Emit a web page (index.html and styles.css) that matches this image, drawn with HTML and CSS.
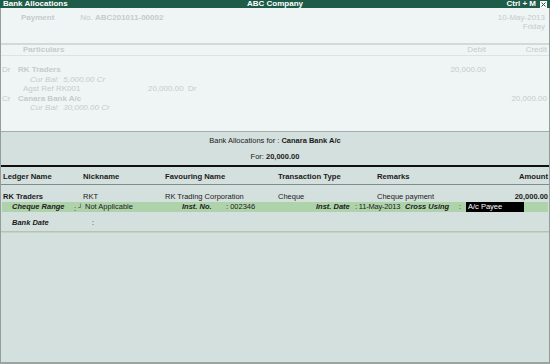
FILE: index.html
```html
<!DOCTYPE html>
<html lang="en">
<head>
    <meta charset="UTF-8">
    <title>Bank Allocations</title>
    <link rel="stylesheet" href="styles.css">
</head>
<body>
<div class="screen">
    <div class="titlebar">
        <span class="tb-left">Bank Allocations</span>
        <span class="tb-center">ABC Company</span>
        <span class="tb-right">Ctrl + M
            <svg class="close" width="7" height="7" viewBox="0 0 7 7">
                <rect x="0.5" y="0.5" width="6" height="6" fill="#ffffff" stroke="#ffffff"/>
                <path d="M1.5 1.5 L5.5 5.5 M5.5 1.5 L1.5 5.5" stroke="#1e5b48" stroke-width="1"/>
            </svg>
        </span>
    </div>

    <div class="frame">
        <!-- faded voucher behind the allocation screen -->
        <div class="voucher">
            <div class="vhead">
                <div class="vh-left">
                    <span class="vtype">Payment</span>
                    <span class="vno">No. <b>ABC201011-00002</b></span>
                </div>
                <div class="vh-right">
                    <div>10-May-2013</div>
                    <div>Friday</div>
                </div>
            </div>

            <div class="vgrid vcols">
                <span></span>
                <span class="particulars">Particulars</span>
                <span class="num">Debit</span>
                <span class="num">Credit</span>
            </div>

            <div class="ventries">
                <div class="vgrid">
                    <span>Dr</span>
                    <b>RK Traders</b>
                    <span class="num">20,000.00</span>
                    <span></span>
                </div>
                <div class="vgrid">
                    <span></span>
                    <i class="curbal">Cur Bal:&nbsp; 5,000.00 Cr</i>
                    <span></span>
                    <span></span>
                </div>
                <div class="vgrid">
                    <span></span>
                    <span class="agst"><span class="agst-lbl">Agst Ref</span><span class="agst-ref">RK001</span><span>20,000.00&nbsp; Dr</span></span>
                    <span></span>
                    <span></span>
                </div>
                <div class="vgrid">
                    <span>Cr</span>
                    <b>Canara Bank A/c</b>
                    <span></span>
                    <span class="num">20,000.00</span>
                </div>
                <div class="vgrid">
                    <span></span>
                    <i class="curbal">Cur Bal:&nbsp; 30,000.00 Cr</i>
                    <span></span>
                    <span></span>
                </div>
            </div>
        </div>

        <!-- bank allocation panel -->
        <div class="alloc">
            <div class="atitle">Bank Allocations for : <b>Canara Bank A/c</b></div>
            <div class="afor">For: <b>20,000.00</b></div>

            <div class="agrid ahead">
                <span>Ledger Name</span>
                <span>Nickname</span>
                <span>Favouring Name</span>
                <span>Transaction Type</span>
                <span>Remarks</span>
                <span class="num">Amount</span>
            </div>

            <div class="agrid arow">
                <b>RK Traders</b>
                <span>RKT</span>
                <span>RK Trading Corporation</span>
                <span>Cheque</span>
                <span>Cheque payment</span>
                <b class="num">20,000.00</b>
            </div>

            <div class="band">
                <i class="lbl w-range">Cheque Range</i>
                <span class="w-colon1">: <span class="enter">&#9496;</span></span>
                <span class="w-na">Not Applicable</span>
                <i class="lbl w-instno">Inst. No.</i>
                <span class="w-no">: 002346</span>
                <i class="lbl w-instdt">Inst. Date</i>
                <span class="w-dt">: 11-May-2013</span>
                <i class="lbl w-cross">Cross Using</i>
                <span class="w-colon2">:</span>
                <span class="editbox">A/c Payee</span>
            </div>

            <div class="bankdate">
                <i class="lbl w-bank">Bank Date</i>
                <span>:</span>
            </div>

            <div class="endrule"></div>
        </div>
    </div>
</div>
</body>
</html>
```

FILE: styles.css
```css
body {
    margin: 0;
    font-family: "Liberation Sans", Arial, sans-serif;
    background: #d4e0dd;
}
.screen {
    width: 550px;
    height: 364px;
    display: flex;
    flex-direction: column;
    overflow: hidden;
}

/* title bar */
.titlebar {
    height: 8px;
    background-color: #1e5b48;
    color: #ffffff;
    font-size: 8px;
    font-weight: bold;
    line-height: 8px;
    display: grid;
    grid-template-columns: 1fr auto 1fr;
    padding: 0 3px;
    white-space: nowrap;
}
.tb-right {
    justify-self: end;
    display: flex;
    align-items: center;
}
.close {
    margin-left: 4px;
}

.frame {
    flex: 1;
    display: flex;
    flex-direction: column;
    border-left: 1px solid #939e9b;
    border-right: 1px solid #939e9b;
    border-bottom: 2px solid #9aa4a1;
}

/* faded voucher */
.voucher {
    height: 123px;
    background-color: #eef5f4;
    color: #c5cccb;
    font-size: 8px;
    border-bottom: 1px solid #a3adaa;
    white-space: nowrap;
}
.vhead {
    height: 30px;
    padding: 5px 4px 0 20px;
    display: flex;
    justify-content: space-between;
    line-height: 9px;
    border-bottom: 2px solid #d3d9d8;
}
.vtype {
    display: inline-block;
    width: 57px;
    font-weight: bold;
}
.vh-right {
    text-align: right;
}
.vgrid {
    display: grid;
    grid-template-columns: 16px 1fr 60px 61px;
    padding: 0 2px 0 1px;
}
.vcols {
    height: 10px;
    line-height: 10px;
    border-bottom: 1px solid #dde3e2;
}
.particulars {
    padding-left: 5px;
    font-weight: bold;
}
.num {
    text-align: right;
}
.ventries {
    padding-top: 9px;
    line-height: 9.5px;
}
.curbal {
    padding-left: 12px;
}
.agst {
    display: flex;
    padding-left: 5px;
}
.agst-lbl {
    width: 33px;
}
.agst-ref {
    width: 92px;
}

/* allocation panel */
.alloc {
    flex: 1;
    background-color: #d4e0dd;
    color: #1b1b1b;
    font-size: 7.5px;
    white-space: nowrap;
}
.atitle {
    padding-top: 3px;
    line-height: 11px;
    text-align: center;
}
.afor {
    margin-top: 5px;
    line-height: 11px;
    text-align: center;
}
.agrid {
    display: grid;
    grid-template-columns: 80px 82px 113px 99px 1fr auto;
    padding: 0 1px 0 2px;
}
.ahead {
    margin-top: 3px;
    border-top: 2px solid #111111;
    padding-top: 2px;
    line-height: 15px;
    font-weight: bold;
    font-size: 7.7px;
    border-bottom: 1px solid #7f8b88;
}
.arow {
    margin-top: 7px;
    line-height: 10px;
}
.band {
    margin: 0 1px;
    height: 10px;
    line-height: 10px;
    background-color: #aed3ab;
    display: flex;
    padding-left: 10px;
}
.lbl {
    font-weight: bold;
}
.w-range { width: 62px; }
.w-colon1 { width: 11px; }
.w-na { width: 97px; }
.w-instno { width: 44px; }
.w-no { width: 90px; }
.w-instdt { width: 39px; }
.w-dt {
    width: 50px;
    letter-spacing: -0.2px;
}
.w-cross { width: 54px; }
.w-colon2 { width: 7px; }
.enter {
    font-size: 6px;
    vertical-align: 2px;
}
.editbox {
    width: 56px;
    padding-left: 2px;
    background-color: #000000;
    color: #ffffff;
}
.bankdate {
    margin-top: 6px;
    line-height: 10px;
    display: flex;
    padding-left: 11px;
}
.w-bank { width: 80px; }
.endrule {
    margin-top: 3px;
    height: 1px;
    border-top: 1px solid #b3c4b2;
    background-color: #c6d3c4;
}
```
